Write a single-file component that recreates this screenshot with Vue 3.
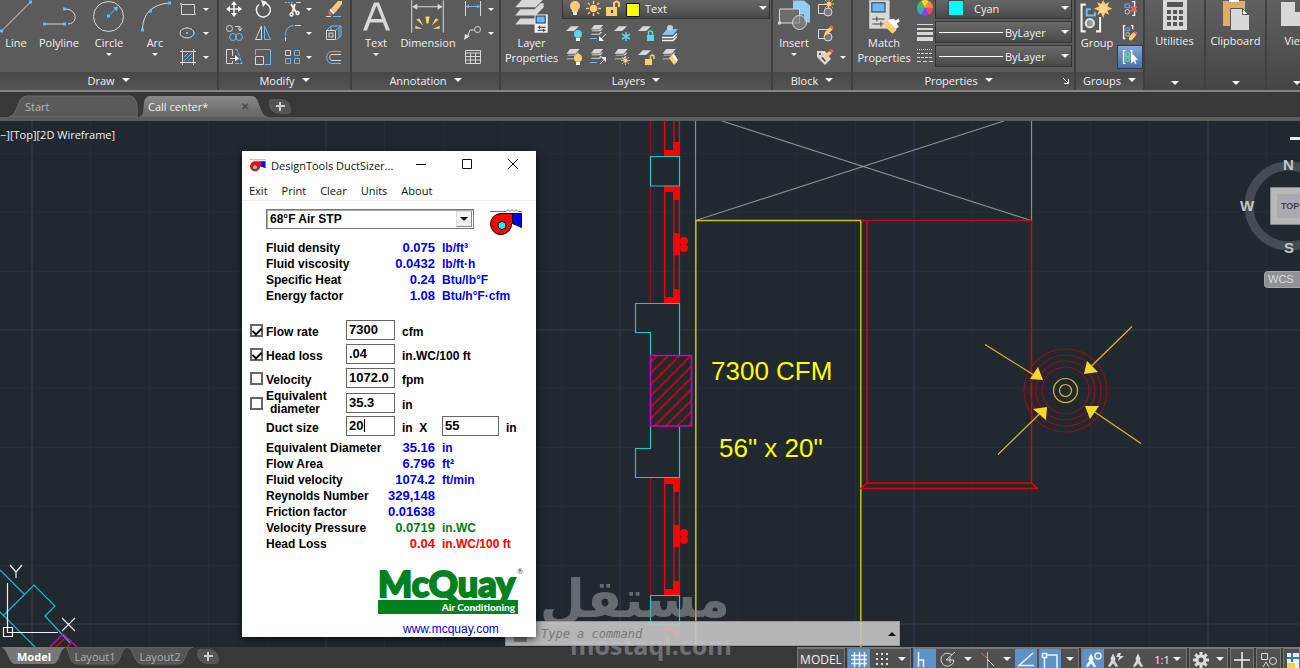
<script setup>
import { ref } from 'vue'

const fluid = ref('68°F Air STP')
const fluidRows = [
  ['Fluid density', '0.075', 'lb/ft³'],
  ['Fluid viscosity', '0.0432', 'lb/ft·h'],
  ['Specific Heat', '0.24', 'Btu/lb°F'],
  ['Energy factor', '1.08', 'Btu/h°F·cfm']
]
const inputs = ref([
  { id: 'flow', label: 'Flow rate', value: '7300', unit: 'cfm', on: true },
  { id: 'loss', label: 'Head loss', value: '.04', unit: 'in.WC/100 ft', on: true },
  { id: 'velocity', label: 'Velocity', value: '1072.0', unit: 'fpm', on: false },
  { id: 'diameter', label: 'Equivalent diameter', value: '35.3', unit: 'in', on: false }
])
const ductWidth = ref('20')
const ductHeight = ref('55')
const results = [
  ['Equivalent Diameter', '35.16', 'in', 'blue'],
  ['Flow Area', '6.796', 'ft²', 'blue'],
  ['Fluid velocity', '1074.2', 'ft/min', 'blue'],
  ['Reynolds Number', '329,148', '', 'blue'],
  ['Friction factor', '0.01638', '', 'blue'],
  ['Velocity Pressure', '0.0719', 'in.WC', 'green'],
  ['Head Loss', '0.04', 'in.WC/100 ft', 'red']
]
const menu = ['Exit', 'Print', 'Clear', 'Units', 'About']
const command = ref('')
const rays = Array.from({ length: 8 }, (_, i) => i * 45)
</script>

<template>
  <div class="app">
    <svg class="defs" aria-hidden="true">
      <symbol id="sheet" viewBox="0 0 16 7"><path d="M6 0h10L10 6H0z" /></symbol>
      <symbol id="stack" viewBox="0 0 16 16"><path fill="#d8d8d8" d="M5 0h10l-4 5H1zM2 7h10l3-3h-2l-2 2H3zM1 11h10l3-3h-2l-2 2H2z" /></symbol>
      <symbol id="sun" viewBox="0 0 16 16">
        <circle cx="8" cy="8" r="4" fill="#ffce73" />
        <path stroke="#ffce73" stroke-width="1.5" d="M8 0v3M8 13v3M0 8h3M13 8h3M2 2l2 2M12 12l2 2M14 2l-2 2M4 12l-2 2" />
      </symbol>
      <symbol id="person" viewBox="0 0 16 16"><path d="M8 0l3 6-1 2 4 7h-3l-3-4-3 4H2l4-7-1-2z" /></symbol>
    </svg>

    <header class="ribbon">
      <section class="panel draw">
        <div class="body">
          <button class="big line"><svg viewBox="0 0 32 34"><path class="w" d="M2 30L30 2" /><path class="bf" d="M0 29h3v3H0zM29 0h3v3h-3z" /></svg>Line</button>
          <button class="big poly"><svg viewBox="32 0 54 34"><path class="w" d="M45 23.500h20M65 8.500c13 0 13 15 3 15" /><path class="bf" d="M43 22h3v3h-3zM63 22h3v3h-3zM63 7h3v3h-3z" /></svg>Polyline</button>
          <button class="big mid"><svg viewBox="86 0 46 34"><circle class="w" cx="108.500" cy="16" r="15" /><path class="b" d="M110 14l6-6" /><path class="bf" d="M107 14h3v3h-3zM113 7l5-1-1 5z" /></svg>Circle<i class="caret"></i></button>
          <button class="big mid"><svg viewBox="132 0 46 34"><path class="w" d="M142.500 29Q143 5 169 2.500" /><path class="bf" d="M141 28h3v3h-3zM149 9h3v3h-3zM168 1h3v3h-3z" /></svg>Arc<i class="caret"></i></button>
          <div class="rows">
            <button aria-label="Rectangle"><svg viewBox="178 -3 20 24"><path class="w" d="M181.500 4.500h13v10h-13z" /><path class="bf" d="M180 3h2v2h-2zM194 13h2v2h-2z" /></svg><i class="caret"></i></button>
            <button aria-label="Ellipse"><svg viewBox="178 21 20 24"><ellipse class="w" cx="187" cy="33" rx="7" ry="5" /><path class="bf" d="M186 27h2v2h-2zM186 32h2v2h-2zM193 32h2v2h-2z" /></svg><i class="caret"></i></button>
            <button aria-label="Hatch"><svg viewBox="178 45 20 24"><path class="w" d="M182.500 49v16M193.500 49v16M180 51.500h16M180 62.500h16" /><path class="b" d="M184 57l4-4M184 61l8-8M188 61l4-4" /></svg><i class="caret"></i></button>
          </div>
        </div>
        <footer>Draw<i class="caret wide"></i></footer>
      </section>

      <section class="panel modify">
        <div class="body">
          <div class="grid4">
            <button aria-label="Move"><svg viewBox="0 0 24 24"><path class="w2" d="M12 6v12M6 12h12" /><path class="wf" d="M12 4l-3 4h6zM12 20l-3-4h6zM4 12l4-3v6zM20 12l-4-3v6z" /></svg></button>
            <button aria-label="Rotate"><svg viewBox="0 0 24 24"><path class="w2" d="M15 6.500a7 7 0 1 1-7 1" /><path class="wf" d="M10 3l6 2-4 5z" /></svg></button>
            <button aria-label="Trim"><svg viewBox="0 0 24 24"><path class="b" stroke-dasharray="2 1" d="M4 5.500h9" /><path class="w" d="M15 5.500h5" /><path class="w2 thick" d="M10 7l5 8M14 7l-3 9" /><circle class="w2" cx="10.500" cy="17.500" r="1.500" /><circle class="w2" cx="16.500" cy="16" r="1.500" /></svg><i class="caret"></i></button>
            <button aria-label="Erase"><svg viewBox="0 0 24 24"><path class="b" d="M11 19.500h8" /><path class="w" d="M4 19.500h5" /><path fill="#ffca78" d="M9 12l7-8h4v3l-7 9z" /><path fill="#ff5c5c" d="M7 14l3 3c-1 3-5 1-3-3z" /><path stroke="#fff" stroke-width="2" d="M8 12.500l4 4" /></svg></button>
            <button aria-label="Copy"><svg viewBox="0 0 24 24"><circle class="w" cx="7.500" cy="7.500" r="3" /><path class="w" d="M13 5.500h5v4M16 7l2 3 2-3" /><circle class="b" cx="11" cy="16" r="3.500" /><circle class="b" cx="17" cy="16" r="3.500" /></svg></button>
            <button aria-label="Mirror"><svg viewBox="0 0 24 24"><path class="w" d="M10.500 5v13.500H4.500z" /><path class="b" d="M13.500 5v13.500H19.500z" fill="#6ab8f7" fill-opacity=".4" /></svg></button>
            <button aria-label="Fillet"><svg viewBox="0 0 24 24"><path class="b" d="M4.500 15Q4 5 13 4.500" /><path class="w" d="M14 4.500h6M4.500 16v4" /></svg><i class="caret"></i></button>
            <button aria-label="Extrude"><svg viewBox="0 0 24 24"><path class="w" d="M4.500 9.500h9v9h-9zM7 12h4v4H7z" /><path class="b" d="M5 9l4-4h10v10l-5 4M14 9l5-4M9 5v4M17 7v10" /></svg></button>
            <button aria-label="Stretch"><svg viewBox="0 0 24 24"><path class="w" d="M10.500 11V4.500h-6v14h6V16M8 13.500h6" /><path class="wf" d="M13 10l4 3.500-4 3z" /><path class="b" d="M13 4.500h2l5 14h-7" stroke-dasharray="4 1" /></svg></button>
            <button aria-label="Scale"><svg viewBox="0 0 24 24"><path class="b" d="M4.500 10V4.500h15v15H14" /><path class="w" d="M4.500 11.500h8v8h-8z" /></svg></button>
            <button aria-label="Array"><svg viewBox="0 0 24 24"><path class="w" d="M4.500 5.500h5v5h-5z" /><path class="b" d="M13.500 5.500h5v5h-5zM4.500 13.500h5v5h-5zM13.500 13.500h5v5h-5z" /></svg><i class="caret"></i></button>
            <button aria-label="Offset"><svg viewBox="0 0 24 24"><path class="b" d="M19 6.500h-9c-7 0-7 12 0 12h9" /><path class="w" d="M19 9.500h-9c-3 0-3 6 0 6h9" /></svg></button>
          </div>
        </div>
        <footer>Modify<i class="caret wide"></i></footer>
      </section>

      <section class="panel annotation">
        <div class="body">
          <button class="big mid"><svg viewBox="0 0 46 34"><path fill="#d8d8d8" d="M21 2h5l11 28h-4l-3-8H17l-3 8h-4zM18 18.500h11L23.500 5z" fill-rule="evenodd" /></svg>Text<i class="caret"></i></button>
          <button class="big dim"><svg viewBox="400 0 57 34"><path class="w" d="M412.500 0v32M443.500 0v32M415 6.500h26" /><path class="lf" d="M413 6.500l5-3v6zM443 6.500l-5-3v6z" /><path fill="#ffce73" d="M426 16h4l-1 7h-2zM417 19l3-1 4 7zM439 19l-3-1-4 7zM416 28h7l-7-3zM440 28h-7l7-3z" /></svg>Dimension</button>
          <div class="rows">
            <button aria-label="Linear"><svg viewBox="463 -3 20 24"><path class="w" d="M465.500 1v15M480.500 1v15" /><path class="b" d="M466 6.500h14" /><path class="bf" d="M466 6.500l3-2v4zM480 6.500l-3-2v4z" /></svg><i class="caret"></i></button>
            <button aria-label="Leader"><svg viewBox="463 21 20 24"><circle class="w" cx="477.500" cy="29.500" r="3" /><path class="w" d="M474 30h-4l-3 8" /><path class="lf" d="M464 40l1-6 5 2z" /></svg><i class="caret"></i></button>
            <button aria-label="Table"><svg viewBox="463 45 20 24"><path class="w" d="M465.500 50.500h15v13h-15zM465 53h15M465 56.500h15M465 60h15M470.500 53v11M475.500 53v11" /></svg></button>
          </div>
        </div>
        <footer>Annotation<i class="caret wide"></i></footer>
      </section>

      <section class="panel layers">
        <div class="body">
          <button class="big layerprops"><svg viewBox="501 0 60 34"><path class="lf" d="M523-2h21l-9 9h-20zM520 9h14l6-6h3v4l-8 8h-20zM520 18h14l4-4v8l-3 2h-20z" /><path fill="#eee" d="M534 14h13v18h-13z" /><path fill="#6ab8f7" stroke="#333" d="M535.500 15.500h9v7h-9z" /><path stroke="#333" d="M537 26.500h8M537 29.500h8M539 25v3M543 28v3" /></svg>Layer<br>Properties</button>
          <div class="layerbox">
            <div class="combo">
              <svg width="82" height="22" viewBox="562 -3 82 22" aria-hidden="true"><circle cx="574" cy="6" r="5" fill="#ffce73" /><path fill="#ffce73" d="M571 8h6v4h-6z" /><path fill="#eee" d="M572 12h4v3h-4z" /><use href="#sun" x="585" y="1" width="15" height="15" /><path fill="#ffce73" d="M605 7h11v9h-11z" /><path fill="none" stroke="#ffce73" stroke-width="2" d="M613 7V3q3-3 5 0v4" /><path fill="#444" d="M610 10h2v3h-2z" /><path fill="#ff0" stroke="#111" d="M625.500 3.500h13v13h-13z" /></svg>
              <select aria-label="Layer"><option>Text</option></select><i class="caret wide"></i>
            </div>
            <div class="grid5">
              <button aria-label="Layer off"><svg viewBox="0 0 24 24"><use href="#sheet" class="lf" x="4" y="5" width="13" height="6" /><circle cx="16" cy="13" r="4" fill="#5fd3e8" /><path class="wf" d="M14 17h4v3h-4z" /></svg></button>
              <button aria-label="Isolate"><svg viewBox="0 0 24 24"><use href="#stack" x="3" y="4" width="16" height="14" /><path class="b" d="M4 17.500h7" /><path class="w" d="M20 13l-5 5" /><path class="wf" d="M13 20v-5l5 5z" /></svg></button>
              <button aria-label="Freeze"><svg viewBox="0 0 24 24"><use href="#sheet" class="lf" x="4" y="5" width="13" height="6" /><path stroke="#5fd3e8" stroke-width="1.500" d="M16 11v9M12 13l8 5M20 13l-8 5" /></svg></button>
              <button aria-label="Lock"><svg viewBox="0 0 24 24"><use href="#sheet" class="lf" x="4" y="5" width="13" height="6" /><path fill="#5fd3e8" d="M13 14h7v6h-7z" /><path fill="none" stroke="#5fd3e8" stroke-width="1.500" d="M14.500 14v-3q2-2 4 0v3" /></svg></button>
              <button aria-label="Make current"><svg viewBox="0 0 24 24"><path class="w2" d="M4 16.500h11l4-4M4 19.500h11l4-4" /><path fill="#7ec3f7" d="M9 8h11l-5 6H4z" /><circle cx="12" cy="7" r="3" fill="#ccc" /></svg></button>
              <button aria-label="Layers on"><svg viewBox="0 0 24 24"><use href="#stack" x="3" y="4" width="16" height="15" /><circle cx="16" cy="13" r="4" fill="#ffce73" /><path class="wf" d="M14 17h4v3h-4z" /></svg></button>
              <button aria-label="Unisolate"><svg viewBox="0 0 24 24"><use href="#stack" x="3" y="4" width="16" height="14" /><path class="b" d="M4 17.500h7" /><path class="w" d="M14 19l5-5" /><path class="wf" d="M15 12h5v5z" /></svg></button>
              <button aria-label="Thaw"><svg viewBox="0 0 24 24"><use href="#stack" x="3" y="4" width="16" height="15" /><use href="#sun" x="11" y="11" width="9" height="9" /></svg></button>
              <button aria-label="Unlock"><svg viewBox="0 0 24 24"><use href="#sheet" class="lf" x="4" y="5" width="13" height="6" /><path fill="#ffce73" d="M11 14h7v6h-7z" /><path fill="none" stroke="#ffce73" stroke-width="1.500" d="M16.500 14v-3q2-2 3.500 0v3" /></svg></button>
              <button aria-label="Match layer"><svg viewBox="0 0 24 24"><use href="#stack" x="3" y="4" width="16" height="15" /><path fill="#ffce73" d="M11 13l3-3 5 7-3 3z" /><path class="wf" d="M14 10l2-1 4 6-2 2z" /></svg></button>
            </div>
          </div>
        </div>
        <footer>Layers<i class="caret wide"></i></footer>
      </section>

      <section class="panel block">
        <div class="body">
          <button class="big insert"><svg viewBox="773 0 42 34"><path fill="#8fcdf8" d="M793 0h11l6 5v17h-6v-8h-11z" /><path d="M779.500 8.500h20v14h-20z" fill="#6d6d6d" stroke="#d8d8d8" /><circle cx="799.500" cy="22" r="7" fill="#888" fill-opacity=".7" stroke="#d8d8d8" /><path class="lf" d="M778 21h3v3h-3z" /></svg>Insert<i class="caret"></i></button>
          <div class="rows">
            <button aria-label="Create block"><svg viewBox="0 0 20 24"><path class="w" d="M3.500 7.500h10v9h-10z" /><circle cx="13" cy="15" r="4" fill="#777" stroke="#d8d8d8" /><use href="#sun" x="9" y="2" width="10" height="10" /></svg></button>
            <button aria-label="Edit block"><svg viewBox="0 0 20 24"><path class="w" d="M3.500 8.500h10v9h-10z" /><circle cx="13" cy="16" r="4" fill="#777" stroke="#d8d8d8" /><path fill="#ffce73" d="M9 15l1-4 5-5 3 2-5 5z" /><path fill="#f55" d="M14 6l2-2 3 2-2 2z" /></svg></button>
            <button aria-label="Edit attributes"><svg viewBox="0 0 20 24"><path class="lf" d="M2 6h8l6 8-6 6-8-8z" /><path fill="#555" d="M4 8h2v2H4zM6 13l2-1 3 4-1 1z" /><path fill="#ffce73" d="M9 14l1-4 4-4 3 2-5 5z" /><path fill="#f55" d="M14 6l2-2 3 2-2 2z" /></svg><i class="caret"></i></button>
          </div>
        </div>
        <footer>Block<i class="caret wide"></i></footer>
      </section>

      <section class="panel properties">
        <div class="body">
          <button class="big match"><svg viewBox="854 0 61 34"><path class="lf" d="M870 0h20v28h-20z" /><path fill="#6ab8f7" stroke="#333" d="M872.500 2.500h13v9h-13z" /><path stroke="#444" d="M873 18.500h12M873 23.500h12M877.500 16v5M881.500 21v5" /><path class="wf" d="M890 19l4-1 2 2 3-2 1 3-3 2 2 3-4 3-7-8z" /><path fill="#ffce73" d="M883 24l5-4 9 9-4 4z" /></svg>Match<br>Properties</button>
          <div class="rows">
            <button aria-label="Color"><svg viewBox="0 0 20 24"><g transform="translate(10 11)"><path fill="#ffd03a" d="M0 0L-4-7A8 8 0 0 1 4-7z" /><path fill="#ff8a3c" d="M0 0L4-7A8 8 0 0 1 8 0z" /><path fill="#f2465a" d="M0 0h8A8 8 0 0 1 4 7z" /><path fill="#8a3cf2" d="M0 0l4 7A8 8 0 0 1-4 7z" /><path fill="#31a8c4" d="M0 0l-4 7A8 8 0 0 1-8 0z" /><path fill="#4cba50" d="M0 0h-8A8 8 0 0 1-4-7z" /></g></svg></button>
            <button aria-label="Lineweight"><svg viewBox="0 0 20 24"><path class="lf" d="M2 3h16v1H2zM2 7h16v2H2zM2 11h16v3H2zM2 16h16v4H2z" /></svg></button>
            <button aria-label="Linetype"><svg viewBox="0 0 20 24"><path class="w" stroke-dasharray="1 1" d="M2 4.500h16" /><path class="w" stroke-dasharray="3 1" d="M2 8.500h16M2 12.500h16" /><path class="w" stroke-dasharray="4 2" d="M2 16.500h16" /></svg></button>
          </div>
          <div class="combos">
            <div class="combo"><span class="swatch"></span><select aria-label="Object color"><option>Cyan</option></select><i class="caret wide"></i></div>
            <div class="combo"><span class="rule"></span><select aria-label="Object lineweight"><option>ByLayer</option></select><i class="caret wide"></i></div>
            <div class="combo"><span class="rule"></span><select aria-label="Object linetype"><option>ByLayer</option></select><i class="caret wide"></i></div>
          </div>
        </div>
        <footer>Properties<i class="caret wide"></i><svg class="launcher" viewBox="0 0 8 8" aria-hidden="true"><path stroke="#eee" fill="none" d="M1 1l5 5M6.500 2v4.500H2" /></svg></footer>
      </section>

      <section class="panel groups">
        <div class="body">
          <button class="big group"><svg viewBox="1077 0 40 34"><path class="w2 thick" d="M1086 4.500h-4v26h4M1096 30.500h4v-14" /><path fill="none" stroke="#6ab8f7" stroke-width="2" d="M1091 9h-4v6h8v-3" /><circle cx="1090" cy="22.500" r="4" fill="#999" stroke="#ddd" stroke-width="2" /><path fill="#ffc873" d="M1103 0l2 4 4-2-2 4 5 2.500-5 2 2 4-4-2-2 5-2-5-4 2 2-4-5-2 5-2.500-2-4 4 2z" /><circle cx="1103" cy="8.500" r="4" fill="#ffd98f" /></svg>Group</button>
          <div class="rows">
            <button aria-label="Ungroup"><svg viewBox="0 0 24 24"><path class="b" d="M6.500 6.500h5v4h-5z" /><circle class="w" cx="9" cy="15" r="2.500" /><path class="w2" d="M14 4h3v15h-3" /><path stroke="#ff5c5c" stroke-width="2.500" d="M13 9l6 6M19 9l-6 6" /></svg></button>
            <button aria-label="Group edit"><svg viewBox="0 0 24 24"><path class="w2" d="M7 4H5v14h2M13 4h2v4" /><path class="b" d="M7.500 6.500h4v3h-4z" /><circle class="w" cx="9.500" cy="13.500" r="2" /><path fill="#ffce73" d="M11 20v-4l5-5 3 3-5 6z" /><path fill="#f55" d="M16 11l2-1 2 2-1 2z" /></svg></button>
            <button class="active" aria-label="Group selection"><svg viewBox="0 0 24 24"><path class="w2" d="M7 5H5v14h2M14 9V5h-2" /><path fill="none" stroke="#6fd08a" stroke-width="1.500" d="M7.500 7.500h4v4h-4z" /><circle cx="9.500" cy="15" r="2" fill="none" stroke="#6fd08a" stroke-width="1.500" /><path class="wf" d="M13 7v12l3-2 2 3 1-1-1-4h3z" /></svg></button>
          </div>
        </div>
        <footer>Groups<i class="caret wide"></i></footer>
      </section>

      <button class="panel tall"><svg viewBox="1144 0 60 33"><path class="lf" d="M1162 0h24v30h-24z" /><path fill="#555" d="M1166 2h16v5h-16zM1166 10h4v4h-4zM1172 10h4v4h-4zM1178 10h4v4h-4zM1166 16h4v4h-4zM1172 16h4v4h-4zM1178 16h4v4h-4zM1166 22h4v4h-4zM1172 22h4v4h-4zM1178 22h4v4h-4z" /></svg>Utilities<i class="caret wide"></i></button>
      <button class="panel tall"><svg viewBox="1205 0 60 33"><path fill="#e0ab6a" d="M1222 1h22v25h-22z" /><path class="wf" d="M1228 0h10v2h-10z" /><path class="lf" stroke="#555" d="M1229.500 8.500h12l7 7v15h-19z" /><path fill="#fff" stroke="#555" d="M1241.500 8.500v6h6z" /></svg>Clipboard<i class="caret wide"></i></button>
      <button class="panel tall"><svg viewBox="1266 0 60 33"><path class="lf" d="M1280 2h14v10h20v14h-34z" /></svg>View<i class="caret wide"></i></button>
    </header>

    <nav class="tabs" aria-label="Drawings">
      <button class="tab start"><svg viewBox="0 0 134 22" preserveAspectRatio="none" aria-hidden="true"><path fill="#5a5a5a" stroke="#6a6a6a" d="M0 22c10-2 8-21 18-21h106c8 0 9 12 8 21z" /></svg><span>Start</span></button>
      <button class="tab current"><svg viewBox="0 0 134 22" preserveAspectRatio="none" aria-hidden="true"><defs><linearGradient id="tabfill" x2="0" y2="1"><stop stop-color="#8a8a8a" /><stop offset="1" stop-color="#646464" /></linearGradient></defs><path fill="url(#tabfill)" d="M0 22c9-2 0-21 12-21h104c10 0 6 19 18 21z" /></svg><span>Call center*</span><b>✕</b></button>
      <button class="plus" aria-label="New drawing"></button>
    </nav>

    <main class="canvas">
      <svg class="drawing" aria-label="Duct layout">
        <defs>
          <pattern id="grid" width="294" height="294" patternUnits="userSpaceOnUse" x="31" y="35">
            <path stroke="#252d37" stroke-width="1" d="M59.500 0v294M118.500 0v294M177.500 0v294M236.500 0v294M0 59.500h294M0 118.500h294M0 177.500h294M0 236.500h294" />
            <path stroke="#2b323f" stroke-width="2" d="M1 0v294M0 1h294" />
          </pattern>
          <pattern id="hatch" width="8" height="8" patternUnits="userSpaceOnUse" patternTransform="rotate(45)"><path stroke="#e80000" stroke-width="1.500" d="M4 0v8" /></pattern>
        </defs>
        <g transform="translate(0 -121)" fill="none" stroke-width="1.200">
          <rect fill="url(#grid)" width="4000" height="4000" />
          <g stroke="#8b8b8b"><path d="M695.500 121v99.500M1031.500 121v99.500M722 121l309 99.500M1004 121L695.500 220.500M861 220.500h6" /></g>
          <g>
            <path stroke="#a00d12" stroke-width="1.500" d="M650.500 121v35M650.500 186v117M650.500 478v117M650.500 625v30" />
            <path stroke="#f00" d="M664.500 121v35M664.500 186v117M664.500 478v117M664.500 625v30M674 121v182M679.500 121v35M679.500 186v117M679.500 478v117M674 478v117" />
            <path fill="#f00" d="M664 150h9v-8h7v15h-16zM664 186h16v14h-7v-8h-9zM664 297h9v-8h7v14h-16zM664 478h16v14h-7v-8h-9zM664 589h9v-8h7v15h-16zM664 625h16v14h-7v-8h-9zM673 233h7v22h-7zM673 525h7v22h-7z" />
            <g fill="#f00"><circle cx="684" cy="241" r="4" /><circle cx="684" cy="248" r="4" /><circle cx="684" cy="533" r="4" /><circle cx="684" cy="540" r="4" /></g>
            <path fill="#212830" stroke="#16c8d2" d="M650.500 156.500h29v29.500h-29zM650.500 595.500h29v29.500h-29zM679.500 355V303.500h-44v29h15V355M679.500 427v50.500h-44v-29h15V427" />
          </g>
          <path fill="url(#hatch)" stroke="#c800c8" stroke-width="1.500" d="M650.500 355.500h41v70.500h-41z" />
          <path stroke="#c8c800" stroke-width="1.500" d="M695.800 660V220.500h165V660" />
          <path stroke="#c80a10" stroke-width="1.500" d="M861 220.500h170.500V483M867 220.500V483" />
          <path stroke="#e60000" stroke-width="1.500" d="M867 483h164.500l6 5.500H861z" />
          <g stroke="#8c1219"><circle cx="1065.500" cy="390.500" r="23.500" /><circle cx="1065.500" cy="390.500" r="29.500" /><circle cx="1065.500" cy="390.500" r="35.500" /><circle cx="1065.500" cy="390.500" r="41.500" /></g>
          <g stroke="#d8b92f"><circle cx="1065.500" cy="390.500" r="12" /><circle cx="1065.500" cy="390.500" r="6" /><path d="M985 344.500l48 30M1132 326.500l-44 43M1141 443.500l-50-34M998 454.500l44-43" /></g>
          <path fill="#fbd62e" d="M1038 367l5 13-13-1zM1087 361l11 11-14 2zM1085 406h14l-9 13zM1047 407l-1 13-13-11z" />
          <g fill="#ff0" class="cad"><text x="711" y="380">7300 CFM</text><text x="719" y="457">56" x 20"</text></g>
          <g stroke="#12c2c8"><path d="M0 570l24 24M0 612l36 36M3 616l31-31 21 21-10 10 26 28" /></g>
          <path stroke="#c800c8" stroke-width="1.500" d="M50 647l13-13 14 13" /><path stroke="#e00000" stroke-width="1.500" d="M56 647l9-9M67 647l5-5" />
          <g stroke="#eee"><path d="M7.500 583v49.500H58M3.500 627.500h9v9h-9zM10 565l6 7 6-7M16 572v6M62 618l13 13M75 618l-13 13" /></g>
        </g>
      </svg>

      <aside class="cube">
        <svg viewBox="1236 121 64 180" aria-label="View cube">
          <path stroke="#e8e8e8" stroke-width="3" d="M1290 138.500h12" />
          <circle cx="1289" cy="206" r="40" fill="none" stroke="#454b52" stroke-width="9" />
          <path fill="#b5b7b8" stroke="#888" d="M1270.500 187.500h38v37h-38z" /><path fill="#a9abb0" d="M1277 194h30v24h-30z" />
          <rect x="1264.500" y="271.500" width="50" height="16" rx="3" fill="#8f9194" stroke="#a5a7aa" />
          <g class="compass"><text x="1283" y="170">N</text><text x="1240" y="211">W</text><text x="1284" y="253">S</text></g>
          <text class="top" x="1281" y="209">TOP</text><text class="wcs" x="1268" y="283">WCS</text>
        </svg>
      </aside>

      <form class="command" @submit.prevent><svg viewBox="0 0 26 24" aria-hidden="true"><path fill="#777" d="M8 12h13v8H8z" /></svg><input v-model="command" aria-label="Command" placeholder="Type a command"><i class="up"></i></form>

      <section class="window" aria-label="DesignTools DuctSizer">
        <header class="title">
          <svg width="17" height="14" viewBox="0 0 34 27" aria-hidden="true"><path fill="#00f" d="M22 4h11v14l-11-4z" /><path fill="#f00" d="M11 4h14v8h-3a10 10 0 1 1-11-8z" /><circle cx="12" cy="16" r="4" fill="#0ff" /><path stroke="#666" d="M0 1h33" /></svg>
          <h1>DesignTools DuctSizer...</h1>
          <button aria-label="Minimize"><svg viewBox="0 0 12 12"><path d="M1 6.500h10" /></svg></button>
          <button aria-label="Maximize"><svg viewBox="0 0 12 12"><path d="M1.500 1.500h9v9h-9z" /></svg></button>
          <button aria-label="Close"><svg viewBox="0 0 12 12"><path d="M1 1l10 10M11 1L1 11" /></svg></button>
        </header>
        <nav class="menu"><button v-for="m in menu" :key="m">{{ m }}</button></nav>
        <div class="content">
          <div class="pick">
            <div class="fluid">
              <select v-model="fluid" aria-label="Fluid"><option>68°F Air STP</option></select>
              <span class="drop"><i class="caret wide"></i></span>
            </div>
            <svg width="34" height="27" viewBox="0 0 34 27" aria-hidden="true"><path stroke="#777" fill="none" d="M1 2.500h16l2-2 2 2 2-2 2 2 2-2 2 2h4" /><path fill="#999" d="M5 24q8 6 15-3l3-5v-3z" /><path fill="#00f" stroke="#000" d="M23.500 4.500h9v14l-9-4z" /><path fill="#f00" stroke="#000" d="M12 4.500h11.500v9l-1 1a10.500 10.500 0 1 1-10.500-10z" /><circle cx="13" cy="16.500" r="4" fill="#0ff" stroke="#000" /></svg>
          </div>
          <table class="blue"><tbody><tr v-for="r in fluidRows" :key="r[0]"><th scope="row">{{ r[0] }}</th><td>{{ r[1] }}</td><td>{{ r[2] }}</td></tr></tbody></table>
          <div class="form">
            <div v-for="f in inputs" :key="f.id" class="field">
              <input :id="f.id + '-on'" v-model="f.on" type="checkbox" :aria-label="'Use ' + f.label">
              <label :for="f.id" :class="{ two: f.id === 'diameter' }">{{ f.label }}</label>
              <input :id="f.id" v-model="f.value" type="text"><span>{{ f.unit }}</span>
            </div>
            <div class="field">
              <i></i><label for="duct-w">Duct size</label>
              <div class="edit"><input id="duct-w" v-model="ductWidth" type="text"><i class="cursor"></i></div>
              <span>in&nbsp; X</span><input v-model="ductHeight" class="second" type="text" aria-label="Duct height"><span>in</span>
            </div>
          </div>
          <table><tbody><tr v-for="r in results" :key="r[0]" :class="r[3]"><th scope="row">{{ r[0] }}</th><td>{{ r[1] }}</td><td>{{ r[2] }}</td></tr></tbody></table>
          <div class="brand"><strong>McQuay</strong><sup>®</sup><span>Air Conditioning</span></div>
          <a href="#">www.mcquay.com</a>
        </div>
      </section>
    </main>

    <footer class="status">
      <div class="layouts">
        <button class="lay on"><svg viewBox="0 0 66 19" preserveAspectRatio="none" aria-hidden="true"><path fill="#777" d="M0 0h66c-8 1-7 18-14 18H15C7 18 7 2 0 0z" /></svg><span>Model</span></button>
        <button class="lay"><svg viewBox="0 0 66 19" preserveAspectRatio="none" aria-hidden="true"><path fill="#555" stroke="#666" d="M4 0h62c-8 1-7 18-14 18H15C7 18 7 2 4 0z" /></svg><span>Layout1</span></button>
        <button class="lay"><svg viewBox="0 0 66 19" preserveAspectRatio="none" aria-hidden="true"><path fill="#555" stroke="#666" d="M0 0h66c-8 1-7 18-14 18H15C7 18 7 2 0 0z" /></svg><span>Layout2</span></button>
        <button class="plus" aria-label="New layout"></button>
      </div>
      <div class="tools">
        <div class="set"><button class="model">MODEL</button></div>
        <div class="set">
          <button class="on" aria-label="Grid"><svg viewBox="0 0 22 18"><path class="w2" d="M6.500 2v15M11.500 2v15M16.500 2v15M3 5.500h16M3 9.500h16M3 13.500h16" /></svg></button>
          <button class="snap" aria-label="Snap"><svg viewBox="0 0 22 18"><path stroke="#ddd" stroke-width="2" stroke-dasharray="2 3" d="M5 4h13M5 9h13M5 14h13" /></svg></button>
          <button class="tiny" aria-label="Snap options"><i class="caret wide"></i></button>
        </div>
        <div class="set">
          <button class="on" aria-label="Ortho"><svg viewBox="0 0 22 18"><path class="w2" d="M4.500 2v15M4.500 10h5v7" /></svg></button>
          <button class="snap" aria-label="Polar"><svg viewBox="0 0 22 18"><path class="w" d="M15 5a6.500 6.500 0 1 0 2 5H9l9-8M13 7v6" /></svg></button>
          <button class="tiny" aria-label="Polar options"><i class="caret wide"></i></button>
          <button aria-label="Isodraft"><svg viewBox="0 0 22 18"><path stroke="#8bd08b" d="M11.500 2v16" /><path stroke="#f06060" d="M5 3l7 6" /><path stroke="#eee" d="M11 9l7 7" /></svg></button>
          <button class="tiny" aria-label="Isodraft options"><i class="caret wide"></i></button>
          <button class="on" aria-label="Tracking"><svg viewBox="0 0 22 18"><path class="w2" d="M18 3L4 15.500h15" /></svg></button>
          <button class="on gap" aria-label="Object snap"><svg viewBox="0 0 22 18"><path class="w2" d="M3.500 3.500h4v4h-4zM8 5h10v13M5.500 8v10" /></svg></button>
          <button class="tiny" aria-label="Snap list"><i class="caret wide"></i></button>
        </div>
        <div class="set">
          <button class="on" aria-label="Annotation visibility"><svg viewBox="0 0 22 18"><use href="#person" class="wf" x="2" y="3" width="14" height="15" /><circle class="w2" cx="16" cy="6" r="3" /></svg></button>
          <button aria-label="Auto scale"><svg viewBox="0 0 22 18"><use href="#person" class="lf" x="2" y="3" width="14" height="15" /><path class="lf" d="M14 3h3l-1 3h4l-6 5 1-4h-3z" /></svg></button>
          <button class="snap" aria-label="Annotative"><svg viewBox="0 0 22 18"><use href="#person" class="lf" x="4" y="3" width="14" height="15" /></svg></button>
          <button class="scale">1:1<i class="caret wide"></i></button>
        </div>
        <div class="set">
          <button aria-label="Workspace"><svg viewBox="0 0 22 18"><circle cx="11" cy="10" r="4" fill="none" stroke="#ddd" stroke-width="3" /><path v-for="a in rays" :key="a" stroke="#ddd" stroke-width="3" d="M11 2v4" :transform="`rotate(${a} 11 10)`" /></svg></button>
          <button class="tiny end" aria-label="Workspace options"><i class="caret wide"></i></button>
        </div>
        <div class="set"><button aria-label="Monitor"><svg viewBox="0 0 22 18"><path class="w2" d="M11 2v16M3 10h16" /></svg></button></div>
        <div class="set"><button class="snap" aria-label="Isolate objects"><svg viewBox="0 0 22 18"><path class="w" d="M3.500 3.500h6v6h-6z" /><path class="w" d="M5 17l3-5 3 5" /><circle class="w" cx="15" cy="11" r="3.500" /></svg></button></div>
        <div class="set"><button class="last" aria-label="Performance"><svg viewBox="0 0 22 18"><path fill="#eee" d="M3 3h14v15H3z" /><path stroke="#2d7cc0" stroke-width="2" d="M3 8h12M8 3v9" /><path fill="#ffce43" d="M3 13h8v5H3z" /></svg></button></div>
      </div>
    </footer>

    <div class="watermark" aria-hidden="true"><span lang="ar" dir="rtl">مستقل</span><em>mostaql.com</em></div>
  </div>
</template>

<style>
html, body { margin: 0; background: #383838; }
</style>

<style scoped>
* { box-sizing: border-box; }
.app { position: relative; display: flex; flex-direction: column; height: 100vh; overflow: hidden; background: #383838; color: #f0f0f0; font: 11px/15px "Open Sans", "Noto Sans", sans-serif; }
.defs { position: absolute; width: 0; height: 0; }
button, input, select { font: inherit; color: inherit; border: 0; padding: 0; margin: 0; background: none; outline: 0; border-radius: 0; }
select { appearance: none; }
.w, .b, .w2 { fill: none; stroke: #d8d8d8; }
.b { stroke: #6ab8f7; }
.w2 { stroke: #f2f2f2; stroke-width: 1.5; }
.thick { stroke-width: 2; }
.wf { fill: #fff; }
.lf { fill: #d8d8d8; }
.bf { fill: #6ab8f7; }
.caret { display: inline-block; border: 3px solid transparent; border-top-color: #f4f4f4; border-bottom: 0; }
.caret.wide { border-width: 4px 4px 0; }

.ribbon { display: flex; flex: none; height: 92px; background: #5b5b5b; border-bottom: 2px solid #838383; overflow: hidden; }
.panel { flex: none; display: flex; flex-direction: column; height: 90px; border-right: 2px solid #404040; }
.body { display: flex; height: 72px; overflow: hidden; align-items: flex-end; }
.panel > footer { position: relative; display: flex; align-items: center; justify-content: center; gap: 7px; height: 18px; padding-bottom: 2px; background: linear-gradient(#484848, #555); }
.panel.properties > footer { padding-right: 10px; }
.big { align-self: flex-start; flex: none; display: flex; flex-direction: column; align-items: center; text-align: center; overflow: hidden; }
.big svg { width: 100%; height: 35px; flex: none; }
.big .caret { margin-top: 3px; }
.rows { padding-bottom: 3px; }
.rows button { display: flex; align-items: center; gap: 5px; height: 24px; }
.rows svg { width: 20px; height: 24px; }
.draw { width: 219px; }
.line { width: 32px; }
.poly { width: 54px; }
.mid { width: 46px; }
.modify { width: 133px; }
.grid4 { display: grid; grid-template-columns: 29px 30px 41px 24px; padding: 0 0 3px 3px; }
.grid4 button, .grid5 button { display: flex; align-items: center; height: 24px; }
.grid4 svg, .grid5 svg { width: 24px; height: 24px; flex: none; }
.grid4 .caret { margin-left: 1px; }
.annotation { width: 149px; }
.annotation .mid { margin-left: 1px; }
.dim { width: 58px; }
.annotation .rows { padding-left: 6px; }
.layers { width: 272px; }
.layerprops { width: 61px; }
.layerbox { flex: 1; padding-bottom: 3px; padding-right: 1px; }
.combo { display: flex; align-items: center; height: 22px; border: 1px solid #333; background: linear-gradient(#6a6a6a, #4a4a4a); padding-right: 2px; }
.combo select { flex: 1; min-width: 0; }
.layerbox .combo { margin-bottom: 2px; }
.grid5 { display: grid; grid-template-columns: repeat(5, 24px); }
.block { width: 80px; }
.insert { width: 42px; }
.properties { width: 223px; }
.match { width: 62px; }
.combos { flex: 1; display: grid; gap: 2px; padding: 0 2px 5px 0; }
.swatch { width: 16px; height: 16px; margin: 0 10px 0 12px; background: #0ff; border: 1px solid #444; }
.rule { width: 64px; height: 1px; margin: 0 2px 0 3px; background: #fff; }
.launcher { position: absolute; right: 4px; top: 5px; width: 8px; height: 8px; }
.groups { width: 69px; }
.group { width: 42px; }
.groups .rows svg { width: 24px; height: 22px; }
.active svg { background: linear-gradient(#7aa9dd, #4b6fa8); outline: 1px solid #2b3c58; }
.tall { width: 61px; align-items: center; background: linear-gradient(#606060, #454545); }
.tall svg { width: 60px; height: 33px; flex: none; }
.tall .caret { margin-top: 33px; }

.tabs { display: flex; flex: none; height: 29px; padding: 3px 0 0 9px; background: #383838; border-bottom: 4px solid #5b5b5b; }
.tab { position: relative; width: 130px; height: 22px; text-align: left; }
.tab svg, .lay svg { position: absolute; inset: 0; width: 100%; height: 100%; }
.tab span, .tab b, .lay span { position: relative; }
.start { padding-left: 16px; color: #b4b4b4; }
.current { padding: 0 20px 0 9px; display: flex; align-items: center; justify-content: space-between; }
.tab b { color: #4a4a4a; font-size: 10px; }
.plus { align-self: center; width: 22px; height: 15px; background: linear-gradient(#ccc, #ccc) center / 9px 2px no-repeat, linear-gradient(#ccc, #ccc) center / 2px 9px no-repeat, #555; border-radius: 3px 10px 3px 10px; }

.canvas { position: relative; flex: 1; min-height: 0; overflow: hidden; background: #212830; }
.drawing { position: absolute; inset: 0; width: 100%; height: 100%; }
.canvas::after { content: "−][Top][2D Wireframe]"; position: absolute; left: 0; top: 6px; font-size: 11px; }
.cad { font: 26px "Liberation Sans", Arial, sans-serif; }
.cube { position: absolute; right: 0; top: 0; width: 64px; height: 180px; }
.compass { font: bold 15px "Liberation Sans", Arial, sans-serif; fill: #c4c6c8; }
.top { font: bold 9px "Liberation Sans", Arial, sans-serif; fill: #444; }
.wcs { font: 11px "Liberation Sans", Arial, sans-serif; fill: #ddd; }
.command { position: absolute; z-index: 2; left: 505px; bottom: 1px; display: flex; align-items: center; width: 395px; height: 25px; background: #c2c3c4ea; border: 1px solid #999; padding-right: 3px; }
.command svg { width: 26px; height: 24px; }
.command input { flex: 1; min-width: 0; padding-left: 9px; font: italic 12px "DejaVu Sans Mono", monospace; color: #333; }
.command input::placeholder { color: #777; opacity: 1; }
.up { border: 4px solid transparent; border-bottom-color: #111; border-top: 0; }

.window { position: absolute; z-index: 3; left: 242px; top: 30px; width: 294px; height: 486px; background: #fff; color: #111; box-shadow: 0 2px 8px #000a; }
.title { display: flex; align-items: center; height: 29px; padding-left: 7px; }
.title h1 { flex: 1; margin: 0 0 0 5px; font-size: 11px; font-weight: 400; }
.title button { width: 46px; height: 29px; }
.title button svg { width: 12px; height: 12px; fill: none; stroke: #111; }
.menu { display: flex; gap: 14px; height: 21px; padding: 2px 7px 0; border-bottom: 1px solid #eee; }
.menu button { height: 16px; }
.content { font: bold 12px/16px "Liberation Sans", Arial, sans-serif; color: #000; }
.pick { display: flex; gap: 15px; padding: 8px 0 0 24px; height: 39px; }
.fluid { position: relative; width: 208px; height: 20px; border: 1px solid #777; box-shadow: inset 1px 1px #aaa; }
.fluid select { width: 100%; height: 18px; padding-left: 3px; }
.drop { position: absolute; right: 1px; top: 1px; width: 16px; height: 16px; background: #f0f0f0; border: 1px solid #888; border-top-color: #ddd; border-left-color: #ddd; display: grid; place-items: center; pointer-events: none; }
.drop .caret { border-top-color: #000; }
table { border-collapse: collapse; margin-left: 24px; }
th, td { padding: 0; height: 16px; font: inherit; text-align: left; white-space: nowrap; }
th { width: 117px; color: #000; }
td { width: 82px; padding-left: 7px; }
td:nth-child(2) { width: 52px; padding: 0; font-size: 13px; text-align: right; }
.blue td { color: #00e; }
.green td { color: #007a1a; }
.red td { color: #f00; }
.form { padding: 14px 0 2px 8px; }
.field { display: grid; grid-template-columns: 16px 80px 49px 33px 57px auto; align-items: center; height: 24px; }
.field > span { padding: 3px 0 0 7px; white-space: nowrap; }
.field > label { padding-top: 3px; white-space: nowrap; }
.field > label.two { padding: 0 0 0 4px; line-height: 13px; white-space: normal; text-indent: -4px; }
.field > input[type="text"], .edit input { width: 49px; height: 20px; border: 1px solid #666; padding: 0 2px 2px; font-size: 13px; }
.field > input.second { width: 57px; }
.field:last-child { grid-template-columns: 16px 80px 49px 47px 57px auto; }
.field input[type="checkbox"] { appearance: none; width: 13px; height: 13px; border: 2px solid #666; display: grid; place-items: center; }
.field input[type="checkbox"]:checked::after { content: ""; width: 4px; height: 7px; margin-bottom: 2px; border: solid #000; border-width: 0 2px 2px 0; transform: rotate(45deg); }
.edit { position: relative; height: 20px; }
.cursor { position: absolute; left: 18px; top: 3px; width: 1px; height: 13px; background: #000; }
.brand { position: relative; width: 140px; height: 49px; margin: 14px 0 0 136px; font-family: Lato, sans-serif; font-weight: 900; color: #00801e; }
.brand strong { display: block; font-size: 36px; line-height: 34px; height: 34px; font-weight: 900; -webkit-text-stroke: 2px #00801e; }
.brand sup { position: absolute; right: -5px; top: -2px; font-size: 7px; line-height: 14px; font-weight: 400; color: #333; }
.brand span { display: block; height: 14px; padding-right: 3px; background: #00801e; color: #fff; font-size: 10px; line-height: 14px; text-align: right; }
.content a { display: block; margin: 6px 0 0 161px; font-size: 12px; line-height: 16px; font-weight: 400; color: #00c; text-decoration: none; }

.status { position: relative; flex: none; display: flex; justify-content: space-between; height: 21px; background: #383838; }
.layouts { display: flex; height: 18px; }
.lay { position: relative; width: 66px; height: 18px; margin-left: -1px; color: #b0b0b8; }
.lay.on { z-index: 1; margin: 0 -4px 0 1px; color: #fff; font-weight: 700; }
.layouts .plus { margin-left: 4px; }
.tools { display: flex; height: 21px; gap: 2px; background: #3a3a3a; border-top: 1px solid #777; }
.set { display: flex; background: #505050; border: 1px solid #777; border-bottom: 0; }
.set button { width: 22px; height: 20px; display: flex; align-items: center; justify-content: center; }
.set svg { width: 22px; height: 18px; }
.set .on { background: #5e92c6; }
.set .gap { margin-left: 2px; }
.set .snap { width: 23px; }
.set .tiny { width: 17px; }
.set .end { width: 15px; }
.set .model { width: 46px; font-size: 12px; }
.set .scale { width: 37px; gap: 3px; }
.set .last { width: 15px; justify-content: flex-start; overflow: hidden; }
.set .last svg { flex: none; }

.watermark { position: absolute; z-index: 1; left: 570px; bottom: 15px; width: 160px; height: 84px; pointer-events: none; color: #8c9094; opacity: .65; text-align: center; }
.watermark span { display: block; margin-bottom: 8px; font: bold 52px/60px "DejaVu Sans", sans-serif; }
.watermark em { display: block; font: bold 25px/16px "Open Sans", sans-serif; }
</style>
